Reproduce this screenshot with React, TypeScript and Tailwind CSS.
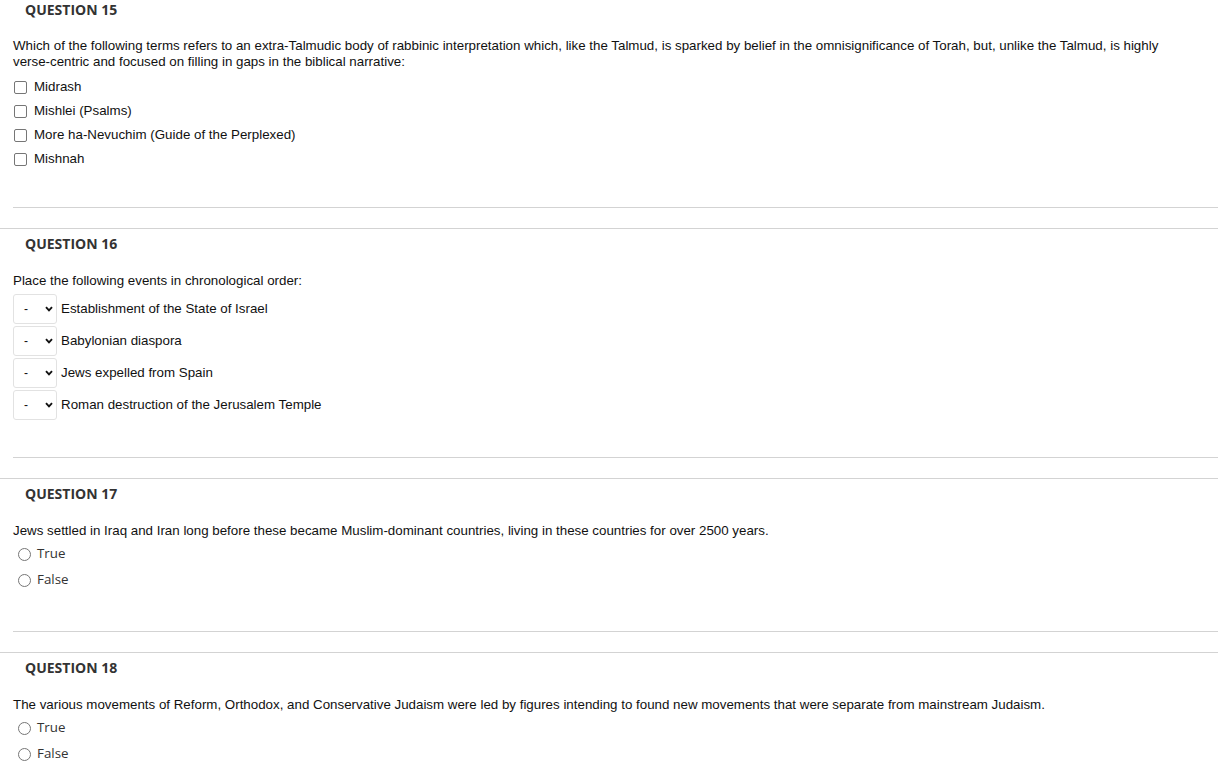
import React from "react";

const arial = { fontFamily: '"Liberation Sans", Arial, sans-serif' };
const open = { fontFamily: '"Open Sans", sans-serif' };

function Header({ n }: { n: number }) {
  return (
    <div className="h-[20px] pl-[25px] text-[14px] leading-[20px] font-bold text-[#333]" style={open}>
      QUESTION {n}
    </div>
  );
}

function QText({ children, mt }: { children: React.ReactNode; mt: string }) {
  return (
    <div className={`${mt} pl-[13px] pr-[40px] text-[13.33px] leading-[16px] text-[#111]`} style={arial}>
      {children}
    </div>
  );
}

function Separator({ mt }: { mt: string }) {
  return (
    <div className={mt}>
      <div className="ml-[13px] border-t border-[#d3d3d3]" />
      <div className="h-[20px]" />
    </div>
  );
}

function Checkbox({ label }: { label: string }) {
  return (
    <div className="flex h-[24px] items-center pl-[14px]">
      <span className="box-border h-[13px] w-[13px] rounded-[2px] border border-[#767676] bg-white" />
      <span className="ml-[7px] text-[13.33px] text-[#111]" style={arial}>
        {label}
      </span>
    </div>
  );
}

function SelectRow({ label }: { label: string }) {
  return (
    <div className="flex h-[32px] items-center pl-[13px]">
      <div className="box-border flex h-[30px] w-[44px] items-center rounded-[3px] border border-[#e2e2e2] bg-white pl-[10px]">
        <span className="text-[12px] text-[#111]" style={arial}>-</span>
        <svg className="ml-[17px]" width="8" height="6" viewBox="0 0 8 6">
          <path d="M1 1.2 L4 4.3 L7 1.2" fill="none" stroke="#111" strokeWidth="1.9" />
        </svg>
      </div>
      <span className="ml-[4px] text-[13.33px] text-[#111]" style={arial}>
        {label}
      </span>
    </div>
  );
}

function Radio({ label }: { label: string }) {
  return (
    <div className="flex h-[26px] items-center pl-[18px]">
      <span className="box-border h-[13px] w-[13px] rounded-full border border-[#767676] bg-white" />
      <span className="ml-[6px] text-[13.33px] text-[#333]" style={open}>
        {label}
      </span>
    </div>
  );
}

function Section({ n, children, first }: { n: number; children: React.ReactNode; first?: boolean }) {
  return (
    <div className={first ? "" : "border-t border-[#d3d3d3] pt-[5px]"}>
      <Header n={n} />
      {children}
    </div>
  );
}

export default function App() {
  return (
    <div className="w-[1218px] bg-white">
      <Section n={15} first>
        <QText mt="mt-[18px]">
          Which of the following terms refers to an extra-Talmudic body of rabbinic interpretation which, like the Talmud, is sparked by belief in the omnisignificance of Torah, but, unlike the Talmud, is highly verse-centric and focused on filling in gaps in the biblical narrative:
        </QText>
        <div className="mt-[5px]">
          <Checkbox label="Midrash" />
          <Checkbox label="Mishlei (Psalms)" />
          <Checkbox label="More ha-Nevuchim (Guide of the Perplexed)" />
          <Checkbox label="Mishnah" />
        </div>
      </Section>
      <Separator mt="mt-[36px]" />
      <Section n={16}>
        <QText mt="mt-[19px]">Place the following events in chronological order:</QText>
        <div className="mt-[4px]">
          <SelectRow label="Establishment of the State of Israel" />
          <SelectRow label="Babylonian diaspora" />
          <SelectRow label="Jews expelled from Spain" />
          <SelectRow label="Roman destruction of the Jerusalem Temple" />
        </div>
      </Section>
      <Separator mt="mt-[36px]" />
      <Section n={17}>
        <QText mt="mt-[19px]">
          Jews settled in Iraq and Iran long before these became Muslim-dominant countries, living in these countries for over 2500 years.
        </QText>
        <div className="mt-[2px]">
          <Radio label="True" />
          <Radio label="False" />
        </div>
      </Section>
      <Separator mt="mt-[38px]" />
      <Section n={18}>
        <QText mt="mt-[19px]">
          The various movements of Reform, Orthodox, and Conservative Judaism were led by figures intending to found new movements that were separate from mainstream Judaism.
        </QText>
        <div className="mt-[2px]">
          <Radio label="True" />
          <Radio label="False" />
        </div>
      </Section>
    </div>
  );
}
